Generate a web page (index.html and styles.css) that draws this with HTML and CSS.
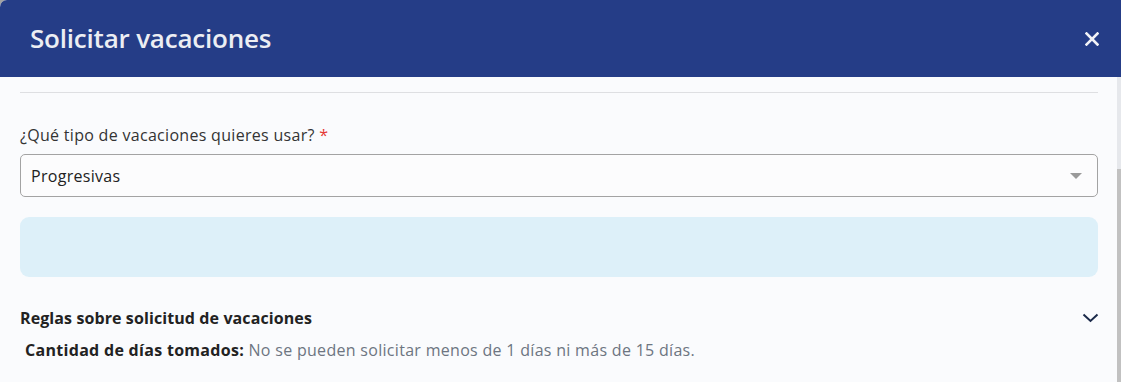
FILE: index.html
```html
<!DOCTYPE html>
<html lang="es">
<head>
  <meta charset="UTF-8">
  <meta name="viewport" content="width=device-width, initial-scale=1.0">
  <title>Solicitar vacaciones</title>
  <link rel="stylesheet" href="styles.css">
</head>
<body>

  <div class="modal">
    <!-- Header -->
    <header class="modal-header">
      <h1>Solicitar vacaciones</h1>
      <button class="close-btn" aria-label="Cerrar">
        <svg width="14" height="14" viewBox="0 0 14 14">
          <path d="M1.5 1.5 L12.5 12.5 M12.5 1.5 L1.5 12.5" stroke="#f2f3f7" stroke-width="2.6" stroke-linecap="square"/>
        </svg>
      </button>
    </header>

    <!-- Body -->
    <div class="modal-body">
      <div class="content">
        <hr class="divider">

        <label class="field-label" for="tipo">¿Qué tipo de vacaciones quieres usar? <span class="required">*</span></label>
        <div class="select">
          <span>Progresivas</span>
          <span class="caret"></span>
        </div>

        <div class="info-box"></div>

        <div class="rules-head">
          <h3>Reglas sobre solicitud de vacaciones</h3>
          <svg width="17" height="10" viewBox="0 0 17 10">
            <path d="M1.5 1.5 L8.5 8 L15.5 1.5" fill="none" stroke="#1b2a4a" stroke-width="2"/>
          </svg>
        </div>
        <p class="rule"><strong>Cantidad de días tomados:</strong> No se pueden solicitar menos de 1 días ni más de 15 días.</p>
      </div>
      <div class="scrollbar"><div class="thumb"></div></div>
    </div>
  </div>

</body>
</html>
```

FILE: styles.css
```css
* {
  margin: 0;
  padding: 0;
  box-sizing: border-box;
}
body {
  font-family: "Open Sans", "Noto Sans", sans-serif;
  background-color: #a3a3a3;
  height: 382px;
  overflow: hidden;
}
.modal {
  background-color: #fafbfd;
  border-top-left-radius: 7px;
  height: 382px;
  overflow: hidden;
  display: flex;
  flex-direction: column;
}
.modal-header {
  flex-shrink: 0;
  background-color: #253d87;
  height: 77px;
  display: flex;
  align-items: center;
  padding: 0 22px 0 30px;
}
.modal-header h1 {
  color: #eceef3;
  font-size: 26px;
  font-weight: 600;
  letter-spacing: -0.2px;
  margin-top: -2px;
}
.close-btn {
  margin-left: auto;
  background: none;
  border: none;
  cursor: pointer;
  display: flex;
  margin-top: 1px;
}
.modal-body {
  flex: 1;
  display: flex;
}
.content {
  flex: 1;
  padding: 0 19px 0 20px;
}
.scrollbar {
  width: 4px;
  background-color: #e6e8ec;
  padding-top: 92px;
}
.thumb {
  background-color: #c1c1c1;
  height: 240px;
}
.divider {
  border: none;
  border-top: 1px solid #dedfe2;
  margin-top: 15px;
}
.field-label {
  display: block;
  margin-top: 31px;
  font-size: 16px;
  letter-spacing: 0.3px;
  color: #333;
}
.required {
  color: #e53935;
}
.select {
  margin-top: 8px;
  height: 43px;
  border: 1px solid #a3a3a3;
  border-radius: 5px;
  display: flex;
  align-items: center;
  padding: 0 15px 0 10px;
  font-size: 16px;
  letter-spacing: 0.3px;
  color: #222;
  background-color: #fcfcfd;
}
.caret {
  margin-left: auto;
  width: 0;
  height: 0;
  border-left: 6px solid transparent;
  border-right: 6px solid transparent;
  border-top: 6px solid #9a9a9a;
}
.info-box {
  margin-top: 20px;
  height: 60px;
  background-color: #ddf0f9;
  border-radius: 9px;
}
.rules-head {
  margin-top: 30px;
  display: flex;
  align-items: center;
  justify-content: space-between;
}
.rules-head h3 {
  font-size: 16px;
  font-weight: 700;
  color: #222;
  letter-spacing: 0.1px;
}
.rules-head svg {
  margin-right: -1px;
}
.rule {
  margin-top: 10px;
  padding-left: 5px;
  font-size: 16px;
  letter-spacing: 0.3px;
  color: #6d7581;
}
.rule strong {
  color: #222;
}
```
